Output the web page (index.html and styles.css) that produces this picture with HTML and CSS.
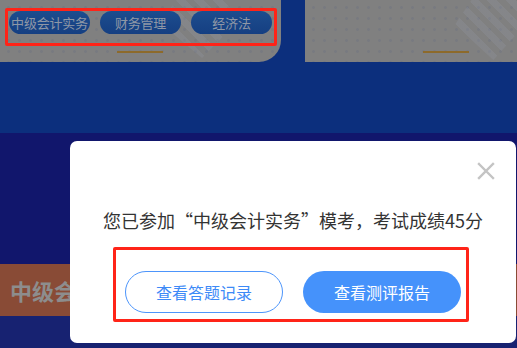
FILE: index.html
```html
<!DOCTYPE html>
<html lang="zh-CN">
<head>
<meta charset="utf-8">
<title>模考成绩</title>
<link rel="stylesheet" href="styles.css">
</head>
<body>
<div class="page">
  <div class="top">
    <div class="card card-left">
      <div class="deco"></div>
      <div class="highlight tabs">
        <span class="pill">中级会计实务</span>
        <span class="pill">财务管理</span>
        <span class="pill">经济法</span>
      </div>
      <div class="gold"></div>
    </div>
    <div class="card card-right">
      <div class="deco deco-right"></div>
      <div class="gold gold-right"></div>
    </div>
  </div>
  <div class="band"></div>
  <div class="lower">
    <div class="orange"><span class="orange-text">中级会计实务</span></div>
  </div>

  <div class="modal">
    <span class="close" aria-label="关闭">
      <svg width="18" height="18" viewBox="0 0 18 18"><path d="M2 2 L16 16 M16 2 L2 16" stroke="#c4c4c4" stroke-width="2.4" stroke-linecap="square" fill="none"/></svg>
    </span>
    <p class="msg">您已参加“中级会计实务”模考，考试成绩45分</p>
    <div class="highlight actions">
      <button class="btn btn-outline">查看答题记录</button>
      <button class="btn btn-fill">查看测评报告</button>
    </div>
  </div>
</div>
</body>
</html>
```

FILE: styles.css
```css
* { box-sizing: border-box; }
html, body { margin: 0; padding: 0; }
body {
  width: 517px;
  height: 348px;
  overflow: hidden;
  font-family: "Noto Sans CJK SC", "Noto Sans", sans-serif;
  background: #12176c;
}
.page {
  position: relative;
  width: 517px;
  height: 348px;
}
.top {
  display: flex;
  gap: 24px;
  height: 62px;
  background: #0c2f7d;
}
.card {
  position: relative;
  background-color: #808080;
  background-image: radial-gradient(circle, #787a80 1.2px, transparent 1.6px);
  background-size: 11px 11px;
  background-position: 3px 2px;
  overflow: hidden;
}
.card-left {
  width: 281px;
  border-bottom-right-radius: 22px;
  display: flex;
  flex-direction: column;
  align-items: flex-start;
  padding: 8px 0 0 5px;
}
.card-right {
  flex: 1;
  display: flex;
  flex-direction: column;
  padding-top: 51px;
}
.deco {
  position: absolute;
  left: 160px;
  top: -6px;
  width: 70px;
  height: 64px;
  background: repeating-linear-gradient(45deg, rgba(150,155,170,0.22) 0 7px, transparent 7px 13px);
  clip-path: polygon(30% 0, 100% 0, 100% 55%, 60% 100%, 0 45%);
}
.deco-right {
  left: 150px;
  top: -4px;
  width: 64px;
}
.highlight {
  border: 3px solid #ff2418;
  border-radius: 2px;
}
.tabs {
  position: relative;
  display: flex;
  gap: 10px;
  width: 272px;
  height: 38px;
  padding: 0 0 0 1px;
}
.pill {
  display: flex;
  align-items: center;
  justify-content: center;
  width: 81px;
  height: 23px;
  border-radius: 12px;
  background: linear-gradient(#1d4d8e, #153f82);
  color: #8e97a6;
  font-size: 13px;
  line-height: 1;
  white-space: nowrap;
  letter-spacing: -0.2px;
}
.gold {
  width: 46px;
  height: 2px;
  background: #8d6a2b;
  margin: 5px 0 0 112px;
}
.gold-right {
  margin: 0 0 0 118px;
}
.band {
  height: 71px;
  background: #0c2f7d;
}
.lower {
  height: 215px;
  padding-top: 131px;
  background: linear-gradient(#11166c 0 183px, #172271 183px);
}
.orange {
  height: 52px;
  background: #894b36;
  display: flex;
  align-items: center;
  padding-left: 10px;
  overflow: hidden;
}
.orange-text {
  color: #8d8d8d;
  font-size: 22px;
  font-weight: 700;
  white-space: nowrap;
}
.modal {
  position: absolute;
  left: 70px;
  top: 141px;
  width: 446px;
  height: 202px;
  background: #fff;
  border-radius: 7px;
  display: flex;
  flex-direction: column;
  align-items: center;
  padding-top: 66px;
}
.close {
  position: absolute;
  right: 21px;
  top: 21px;
  width: 18px;
  height: 18px;
  display: block;
}
.close svg { display: block; }
.msg {
  margin: 0;
  font-size: 18px;
  line-height: 27px;
  color: #333;
  white-space: nowrap;
}
.actions {
  display: flex;
  gap: 20px;
  margin: 13px 0 0 -4px;
  width: 356px;
  height: 75px;
  padding: 21px 0 0 9px;
}
.btn {
  width: 158px;
  height: 42px;
  border-radius: 21px;
  font-family: inherit;
  font-size: 16px;
  line-height: 1;
  padding: 0;
  cursor: pointer;
}
.btn-outline {
  background: #fff;
  border: 1px solid #4d95fb;
  color: #3d8af7;
}
.btn-fill {
  background: #4592fb;
  border: none;
  color: #fff;
}
```
